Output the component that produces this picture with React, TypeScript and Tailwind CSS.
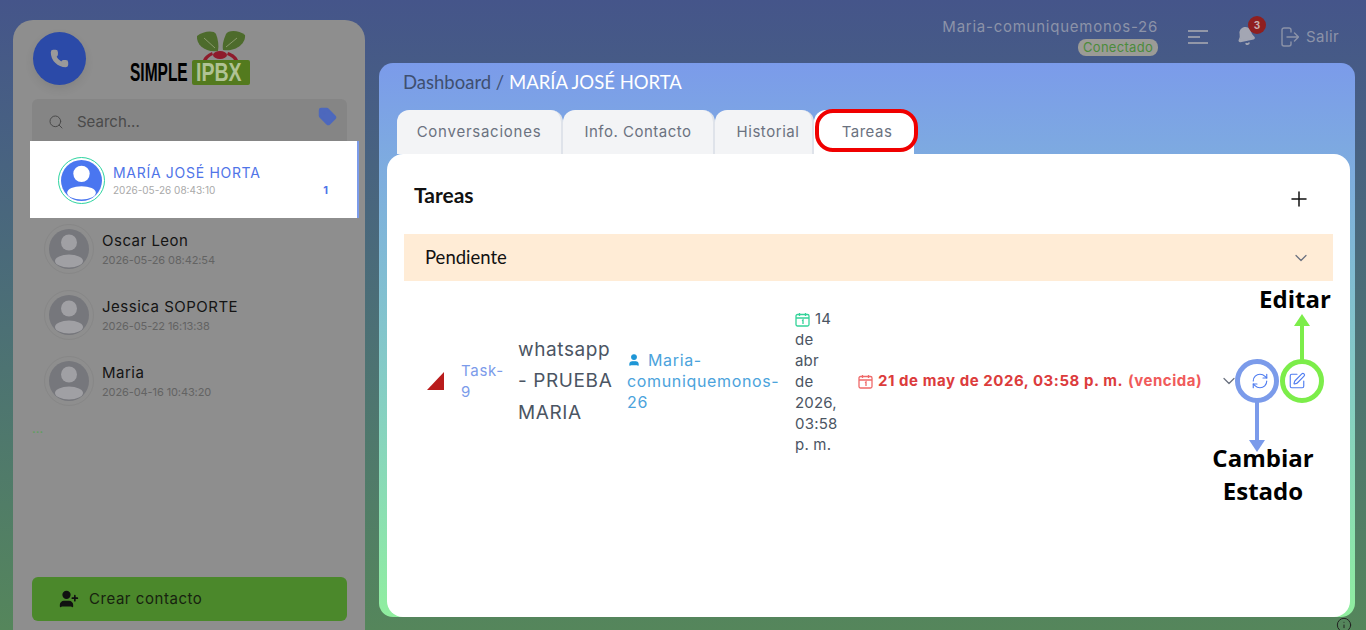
import React from 'react';
import { Search, Tag, Phone, Plus, ChevronDown, RefreshCw, SquarePen, Bell, User, UserPlus, Info } from 'lucide-react';

const mont = "font-['Inter','Noto_Sans',sans-serif]";

const contacts = [
  { name: 'Oscar Leon', date: '2026-05-26 08:42:54' },
  { name: 'Jessica SOPORTE', date: '2026-05-22 16:13:38' },
  { name: 'Maria', date: '2026-04-16 10:43:20' },
];

const Avatar = ({ size, bg, fg }: { size: number; bg: string; fg: string }) => (
  <svg width={size} height={size} viewBox="0 0 40 40" className="shrink-0">
    <circle cx="20" cy="20" r="20" fill={bg} />
    <circle cx="20" cy="13.5" r="8" fill={fg} />
    <ellipse cx="20" cy="32" rx="14" ry="6.5" fill={fg} />
  </svg>
);

const CalIcon = ({ color }: { color: string }) => (
  <svg width="15" height="15" viewBox="0 0 15 15" fill="none" stroke={color} strokeWidth="1.3" className="inline shrink-0">
    <rect x="1" y="2.5" width="13" height="11.5" rx="1.5" />
    <path d="M1 6h13M4.5 1v3M10.5 1v3M7 8.6l1-.6v4" />
  </svg>
);

const Logo = () => (
  <div className="flex flex-col items-start w-[120px] h-[56px]">
    <svg width="52" height="30" viewBox="0 0 52 30" className="ml-[65px]">
      <path d="M23 21 C11 23 1 15 2 6 C8 1 19 0 21 4 C23 9 24 15 23 21Z" fill="#4d6b2c" />
      <path d="M28 20 C40 22 51 14 50 5 C44 0 33 0 31 4 C29 9 27 14 28 20Z" fill="#4d6b2c" />
      <path d="M20 18 L9 8M31 17 L42 8" stroke="#8a9a6c" strokeWidth="1" />
      <ellipse cx="25" cy="25" rx="7" ry="4" fill="#8e1b2c" />
      <path d="M8 30 C9 27 12 24 17 22 L18 25 C15 26 13 28 12 30Z" fill="#8e1b2c" />
      <path d="M43 30 C42 27 39 24 33 22 L32 25 C35 26 38 28 39 30Z" fill="#8e1b2c" />
    </svg>
    <div className="flex items-center gap-[3px] h-[25px]">
      <div className="w-[59px] font-['Liberation_Sans',sans-serif] font-bold text-[25px] leading-none text-black scale-x-[.62] origin-left whitespace-nowrap">SIMPLE</div>
      <div className="w-[58px] h-[25px] bg-[#537a1e] rounded-[2px] whitespace-nowrap text-[#b0c295] font-['Liberation_Sans',sans-serif] font-bold text-[25px] leading-[25px]">
        <span className="inline-block scale-x-[.78] origin-left ml-[4px]">IPBX</span>
      </div>
    </div>
  </div>
);

const Sidebar = () => (
  <aside className={`w-[352px] mt-[20px] bg-[#8e8e8e] rounded-t-[20px] flex flex-col ${mont}`}>
    <div className="flex h-[79px] pl-[20px] pt-[12px]">
      <div className="w-[53px] h-[53px] rounded-full bg-[#2b4aa8] flex items-center justify-center shadow-[0_4px_10px_rgba(0,0,0,0.08)]">
        <Phone size={19} className="text-[#9a9a9a] fill-[#9a9a9a]" />
      </div>
      <div className="ml-[44px] -mt-[2px]"><Logo /></div>
    </div>
    <div className="ml-[19px] mr-[18px] h-[42px] pt-[4px] bg-[#858585] rounded-t-[6px] flex items-center pl-[16px] pr-[10px] text-[#4a4a4a]">
      <Search size={16} strokeWidth={1.5} />
      <span className="ml-[13px] text-[15px]">Search...</span>
      <Tag size={19} className="ml-auto -mt-[12px] text-[#4d68bd] fill-[#4d68bd]" />
    </div>
    <div className="ml-[17px] w-[329px] h-[77px] pt-[2px] bg-white border-r-2 border-[#7b9bea] flex items-center pl-[28px] pr-[29px]">
      <div className="w-[47px] h-[47px] rounded-full border-[1.5px] border-[#2dd4a0] flex items-center justify-center">
        <Avatar size={41} bg="#4a76f0" fg="#ffffff" />
      </div>
      <div className="ml-[8px] flex-1">
        <div className="text-[14px] leading-[18px] text-[#4f74e8] tracking-[.7px]">MARÍA JOSÉ HORTA</div>
        <div className="text-[10px] leading-[16px] text-[#a9a9a9]">2026-05-26 08:43:10</div>
      </div>
      <span className="text-[11px] font-bold text-[#4f74e8] mt-[20px]">1</span>
    </div>
    <div className="flex flex-col pl-[35px] -mt-[2px]">
      {contacts.map(c => (
        <div key={c.name} className="h-[66px] flex items-center">
          <div className="w-[50px] h-[50px] rounded-full border border-[#878787] flex items-center justify-center shrink-0 -ml-[4px]">
            <Avatar size={40} bg="#76777c" fg="#a0a0a4" />
          </div>
          <div className="ml-[8px] pt-[2px]">
            <div className="text-[15px] leading-[20px] text-[#141414] tracking-[.5px]">{c.name}</div>
            <div className="text-[11px] leading-[18px] text-[#636363] tracking-[-.1px]">{c.date}</div>
          </div>
        </div>
      ))}
    </div>
    <div className="ml-[19px] mt-[8px] h-[14px] text-[13px] leading-[12px] text-[#5f9e5f]">...</div>
    <div className="mt-auto mb-[9px] ml-[19px] mr-[18px] h-[44px] bg-[#4b882b] rounded-[6px] flex items-center pl-[27px] text-[#17220f]">
      <UserPlus size={20} className="fill-[#111] text-[#111]" />
      <span className="ml-[10px] text-[15px] tracking-[.55px]">Crear contacto</span>
    </div>
  </aside>
);

const Header = () => (
  <header className={`h-[63px] flex justify-end items-start pr-[16px] pt-[18px] text-[#8c93a8] ${mont}`}>
    <div className="flex flex-col items-end">
      <div className="text-[15px] leading-[18px] tracking-[.75px]">Maria-comuniquemonos-26</div>
      <div className="mt-[3px] h-[17px] w-[80px] rounded-[8px] bg-[#9b9b96] text-[#4b8b3b] text-[13px] leading-[17px] tracking-[.3px] text-center">Conectado</div>
    </div>
    <div className="ml-[30px] mt-[12px] w-[20px] flex flex-col gap-[4.5px]">
      <span className="h-[1.5px] w-[20px] bg-[#9297a8]" />
      <span className="h-[1.5px] w-[12px] bg-[#9297a8]" />
      <span className="h-[1.5px] w-[20px] bg-[#9297a8]" />
    </div>
    <div className="relative ml-[28px] mt-[8px]">
      <Bell size={20} className="fill-[#a3a6b3] text-[#a3a6b3] -rotate-[12deg]" />
      <span className="absolute -top-[10px] left-[12px] w-[18px] h-[18px] rounded-full bg-[#8f1f1f] text-[#c9b0b0] text-[10px] font-bold leading-[18px] text-center">3</span>
    </div>
    <svg width="18" height="20" viewBox="0 0 18 20" fill="none" stroke="#8c93a8" strokeWidth="1.4" strokeLinecap="round" strokeLinejoin="round" className="ml-[25px] mt-[9px]">
      <path d="M10 5V3a2 2 0 0 0-2-2H3a2 2 0 0 0-2 2v14a2 2 0 0 0 2 2h5a2 2 0 0 0 2-2v-2" />
      <path d="M6 10h11.500M13.500 6l4 4-4 4" />
    </svg>
    <span className="ml-[7px] mt-[8px] text-[15px] tracking-[.4px]">Salir</span>
  </header>
);

const tabs = [
  { label: 'Conversaciones', cls: 'w-[166px] tracking-[.75px]' },
  { label: 'Info. Contacto', cls: 'w-[152px] tracking-[.5px]' },
  { label: 'Historial', cls: 'w-[99px] pl-[9px] tracking-[.55px]' },
];

const TaskRow = () => (
  <div className={`flex items-center mt-[25px] ml-[40px] h-[150px] ${mont}`}>
    <svg width="17" height="18" viewBox="0 0 17 18" className="shrink-0"><path d="M17 0V18H0Z" fill="#b91c1c" /></svg>
    <div className="ml-[17px] w-[57px] text-[15px] leading-[21px] text-[#7b9bea] tracking-[.7px]">Task-<br />9</div>
    <div className="w-[109px] text-[19px] leading-[31.5px] text-[#4b5563] tracking-[.6px] whitespace-nowrap">whatsapp<br />- PRUEBA<br />MARIA</div>
    <div className="w-[168px] text-[16px] leading-[21px] text-[#4ba3dc] tracking-[.65px] whitespace-nowrap">
      <User size={14} className="inline fill-[#1e96d6] text-[#1e96d6] mr-[7px] -mt-[3px]" />Maria-<br />comuniquemonos-<br />26
    </div>
    <div className="w-[63px] text-[15px] leading-[21px] text-[#4b5563] tracking-[.2px]">
      <span className="inline-block mr-[5px] -mt-[3px] align-middle"><CalIcon color="#34d399" /></span>14<br />de<br />abr<br />de<br />2026,<br />03:58<br />p. m.
    </div>
    <div className="flex items-center text-[15px] font-bold text-[#dc3c3c] tracking-[.55px] whitespace-nowrap">
      <span className="mr-[5px] flex"><CalIcon color="#ef6a6a" /></span>
      <span>21 de may de 2026, 03:58 p. m.</span>
      <span className="ml-[5px] text-[#f05a5a]">(vencida)</span>
    </div>
    <ChevronDown size={20} strokeWidth={1.5} className="ml-[17px] text-[#6b7280]" />
    <RefreshCw size={18} strokeWidth={1.5} className="ml-[12px] text-[#4f7cf0]" />
    <SquarePen size={18} strokeWidth={1.5} className="ml-[19px] text-[#4f7cf0]" />
  </div>
);

const Annotations = () => (
  <div className="font-['Open_Sans',sans-serif] font-bold text-black text-[24px]">
    <div className="absolute left-[815px] top-[109px] w-[103px] h-[43px] rounded-[18px] border-4 border-[#f00000]" />
    <div className="absolute left-[1235px] top-[359px] w-[44px] h-[44px] rounded-full border-[5px] border-[#7b9bea]" />
    <div className="absolute left-[1280px] top-[359px] w-[44px] h-[44px] rounded-full border-[5px] border-[#7ced4a]" />
    <div className="absolute left-[1300px] top-[322px] w-[4px] h-[38px] bg-[#7ced4a]" />
    <svg className="absolute left-[1294px] top-[314px]" width="16" height="12" viewBox="0 0 16 12"><path d="M8 0L16 12H0Z" fill="#7ced4a" /></svg>
    <div className="absolute left-[1255px] top-[402px] w-[4px] h-[42px] bg-[#7b9bea]" />
    <svg className="absolute left-[1249px] top-[440px]" width="16" height="12" viewBox="0 0 16 12"><path d="M8 12L16 0H0Z" fill="#7b9bea" /></svg>
    <div className="absolute left-[1240px] top-[282px] w-[110px] text-center leading-[33px]">Editar</div>
    <div className="absolute left-[1193px] top-[441px] w-[140px] text-center leading-[33px]">Cambiar<br />Estado</div>
  </div>
);

export default function App() {
  return (
    <div className="relative w-[1366px] h-[630px] overflow-hidden flex pl-[13px] bg-gradient-to-b from-[#45558a] to-[#55865b]">
      <Sidebar />
      <div className="ml-[14px] w-[976px] flex flex-col">
        <Header />
        <main className="h-[554px] rounded-[14px] bg-gradient-to-b from-[#7b9bea] to-[#90ee9f] flex flex-col">
          <div className="pl-[24px] pt-[7px] h-[47px] font-['Lato',sans-serif] text-[18.5px] leading-[24px] text-[#3f4f70]">
            Dashboard / <span className="text-white">MARÍA JOSÉ HORTA</span>
          </div>
          <div className={`flex pl-[18px] h-[44px] ${mont}`}>
            {tabs.map(t => (
              <div key={t.label} className={`${t.cls} bg-[#f3f4f6] rounded-t-[12px] border-r-2 border-[#dfe3ea] text-[#6b7280] text-[15px] flex items-center justify-center`}>{t.label}</div>
            ))}
            <div className="w-[100px] pl-[6px] bg-white rounded-t-[12px] text-[#6b7280] text-[15px] tracking-[.5px] flex items-center justify-center">Tareas</div>
          </div>
          <section className="flex-1 ml-[8px] mr-[5px] bg-white rounded-[16px]">
            <div className="flex items-center justify-between h-[80px] pl-[27px] pr-[39px] pt-[2px] font-['Lato',sans-serif]">
              <span className="text-[21px] font-bold text-[#111]">Tareas</span>
              <Plus size={24} strokeWidth={1.5} className="text-[#111] mt-[8px]" />
            </div>
            <div className="mx-[17px] h-[47px] bg-[#ffecd6] flex items-center justify-between pl-[21px] pr-[22px] font-['Lato',sans-serif] text-[18.5px] text-[#111]">
              Pendiente
              <ChevronDown size={20} strokeWidth={1.5} className="text-[#6b7280]" />
            </div>
            <TaskRow />
          </section>
        </main>
        <Info size={16} strokeWidth={1.5} className="absolute left-[1336px] top-[617px] text-[#222]" />
      </div>
      <Annotations />
    </div>
  );
}
